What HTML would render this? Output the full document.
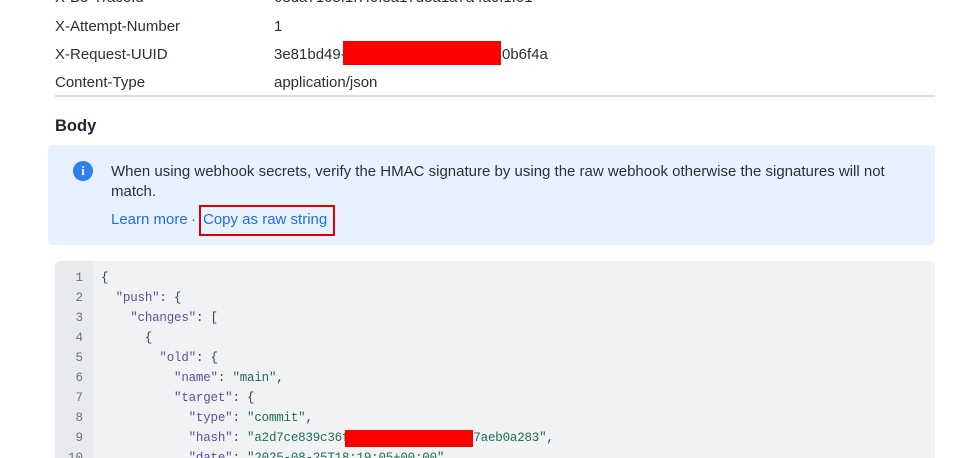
<!DOCTYPE html>
<html><head><style>
html,body{margin:0;width:978px;height:458px;overflow:hidden}
body{background:#fff;font-family:"Liberation Sans",sans-serif;color:#1f2937;position:relative}
.t{position:absolute;font-size:15px;white-space:nowrap;color:#2a2f3a}
.red{position:absolute;background:#ff0000}
.code{position:absolute;left:55px;top:261px;width:880px;height:197px;background:#f1f2f4;border-radius:5px 5px 0 0;overflow:hidden}
.gut{position:absolute;left:0;top:0;width:38px;height:100%;background:#e9eaed}
.ln{position:absolute;left:0;width:28px;text-align:right;font-family:"Liberation Mono",monospace;font-size:12.5px;color:#6b7280}
.cl{position:absolute;left:46px;font-family:"Liberation Mono",monospace;font-size:12.5px;letter-spacing:-0.2px;color:#3b4252;white-space:pre}
.k{color:#5b4f9c}.s{color:#1f6b57}
</style></head><body>
<div class="t" style="left:55px;top:-11px">X-B3-TraceId</div>
<div class="t" style="left:274px;top:-11px">68da7168f1f7f0f8a17d3a1a7a4a0f1f01</div>
<div class="t" style="left:55px;top:18px">X-Attempt-Number</div>
<div class="t" style="left:274px;top:18px">1</div>
<div class="t" style="left:55px;top:46px">X-Request-UUID</div>
<div class="t" style="left:274px;top:46px">3e81bd49-</div>
<div class="t" style="left:502px;top:46px">0b6f4a</div>
<div class="red" style="left:343px;top:41px;width:158px;height:24px"></div>
<div class="t" style="left:55px;top:74px">Content-Type</div>
<div class="t" style="left:274px;top:74px">application/json</div>
<div style="position:absolute;left:55px;top:95px;width:880px;height:2px;background:#dcdde0"></div>
<div class="t" style="left:55px;top:117px;font-size:16.5px;font-weight:bold;color:#1e2532">Body</div>
<div style="position:absolute;left:48px;top:145px;width:887px;height:100px;background:#e8f2fe;border-radius:4px"></div>
<div style="position:absolute;left:73px;top:161px;width:20px;height:20px;border-radius:50%;background:#2f7fef;color:#fff;font-weight:bold;font-size:13px;text-align:center;line-height:20px;font-family:'Liberation Serif',serif">i</div>
<div class="t" style="left:111px;top:162px;line-height:20px">When using webhook secrets, verify the HMAC signature by using the raw webhook otherwise the signatures will not<br>match.</div>
<div class="t" style="left:111px;top:211px;color:#1f6fe0">Learn more</div>
<div class="t" style="left:191px;top:211px;color:#555">·</div>
<div class="t" style="left:203px;top:211px;color:#1f6fe0">Copy as raw string</div>
<div style="position:absolute;left:199px;top:205px;height:31px;width:136px;border:2px solid #e00000;box-sizing:border-box"></div>
<div class="code"><div class="gut"></div>
<div class="ln" style="top:10px">1</div><div class="cl" style="top:10px">{</div>
<div class="ln" style="top:30px">2</div><div class="cl" style="top:30px">  <span class="k">"push"</span>: {</div>
<div class="ln" style="top:50px">3</div><div class="cl" style="top:50px">    <span class="k">"changes"</span>: [</div>
<div class="ln" style="top:70px">4</div><div class="cl" style="top:70px">      {</div>
<div class="ln" style="top:90px">5</div><div class="cl" style="top:90px">        <span class="k">"old"</span>: {</div>
<div class="ln" style="top:110px">6</div><div class="cl" style="top:110px">          <span class="k">"name"</span>: <span class="s">"main"</span>,</div>
<div class="ln" style="top:130px">7</div><div class="cl" style="top:130px">          <span class="k">"target"</span>: {</div>
<div class="ln" style="top:150px">8</div><div class="cl" style="top:150px">            <span class="k">"type"</span>: <span class="s">"commit"</span>,</div>
<div class="ln" style="top:170px">9</div><div class="cl" style="top:170px">            <span class="k">"hash"</span>: <span class="s">"a2d7ce839c36f                 7aeb0a283"</span>,</div>
<div class="ln" style="top:190px">10</div><div class="cl" style="top:190px">            <span class="k">"date"</span>: <span class="s">"2025-08-25T18:19:05+00:00"</span>,</div>
</div>
<div class="red" style="left:345px;top:430px;width:128px;height:17px"></div>
</body></html>
